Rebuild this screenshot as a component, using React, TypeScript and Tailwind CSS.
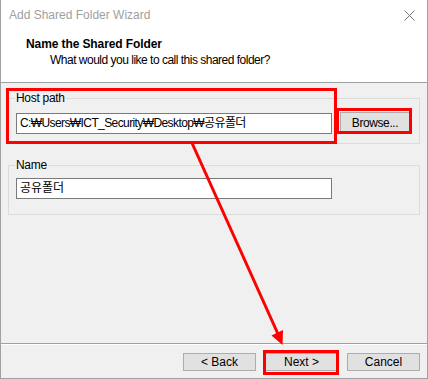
import React from 'react';

const font = "font-['Segoe_UI','Liberation_Sans','Noto_Sans_CJK_KR',sans-serif]";

const GroupBox: React.FC<{ label: string; children: React.ReactNode; className?: string }> = ({ label, children, className }) => (
  <div className={`relative border border-[#dcdcdc] ${className ?? ''}`}>
    <span className="absolute -top-[8px] left-[6px] bg-[#f0f0f0] px-px text-[12px] leading-[15px] tracking-[-0.3px] text-black">{label}</span>
    {children}
  </div>
);

const WinButton: React.FC<{ label: string; className?: string }> = ({ label, className }) => (
  <button className={`h-[18px] w-[73px] border border-[#adadad] bg-[#e1e1e1] text-[12px] leading-[16px] text-black ${className ?? ''}`}>
    {label}
  </button>
);

const App: React.FC = () => {
  return (
    <div className={`relative h-[379px] w-[428px] overflow-hidden bg-[#f0f0f0] ${font}`}>
      <div className="flex h-[379px] flex-col border-x border-b border-[#a0a0a0]">
        {/* title + header */}
        <div className="h-[83px] border-b border-[#a0a0a0] bg-white">
          <div className="flex h-[30px] items-center justify-between pl-[8px] pr-[12px]">
            <span className="text-[12px] text-[#a0a0a0]">Add Shared Folder Wizard</span>
            <svg width="11" height="11" viewBox="0 0 11 11" className="text-[#777]">
              <path d="M0.5 0.5 L10.5 10.5 M10.5 0.5 L0.5 10.5" stroke="currentColor" strokeWidth="1" />
            </svg>
          </div>
          <div className="pl-[25px] pt-[6px]">
            <div className="text-[12px] font-bold leading-[16px] tracking-[-0.1px] text-black">Name the Shared Folder</div>
            <div className="pl-[24px] text-[12px] leading-[16px] tracking-[-0.5px] text-black">What would you like to call this shared folder?</div>
          </div>
        </div>

        {/* body */}
        <div className="flex-1 px-[7px] pt-[15px]">
          <GroupBox label="Host path" className="h-[46px]">
            <div className="flex items-center gap-[8px] pl-[7px] pt-[13px]">
              <div className="h-[21px] w-[316px] border border-[#7a7a7a] bg-white pl-[3px] text-[12px] leading-[19px] tracking-[-0.6px] text-black">
                C:₩Users₩ICT_Security₩Desktop₩공유폴더
              </div>
              <button className="h-[22px] w-[70px] border border-[#adadad] bg-[#e1e1e1] text-[12px] tracking-[-0.4px] text-black">Browse...</button>
            </div>
          </GroupBox>
          <GroupBox label="Name" className="mt-[21px] h-[50px]">
            <div className="pl-[7px] pt-[12px]">
              <div className="h-[21px] w-[316px] border border-[#7a7a7a] bg-white pl-[3px] text-[12px] leading-[19px] text-black">
                공유폴더
              </div>
            </div>
          </GroupBox>
        </div>

        {/* footer */}
        <div className="h-[35px] border-t border-[#a0a0a0]">
          <div className="h-full border-t border-white">
            <div className="flex justify-end gap-[9px] pr-[7px] pt-[8px]">
              <WinButton label="< Back" />
              <WinButton label="Next >" />
              <WinButton label="Cancel" />
            </div>
          </div>
        </div>
      </div>

      {/* red annotations */}
      <div className="absolute left-[6px] top-[88px] h-[56px] w-[331px] border-[3px] border-[#f00]" />
      <div className="absolute left-[336px] top-[108px] h-[26px] w-[76px] border-[3px] border-[#f00]" />
      <div className="absolute left-[263px] top-[350px] h-[25px] w-[76px] border-[3px] border-[#f00]" />
      <svg className="absolute left-0 top-0" width="428" height="379" viewBox="0 0 428 379">
        <line x1="192" y1="143" x2="278" y2="334" stroke="#f00" strokeWidth="3" />
        <polygon points="282.5,345 283,330 271.5,335.5" fill="#f00" />
      </svg>
    </div>
  );
};

export default App;
